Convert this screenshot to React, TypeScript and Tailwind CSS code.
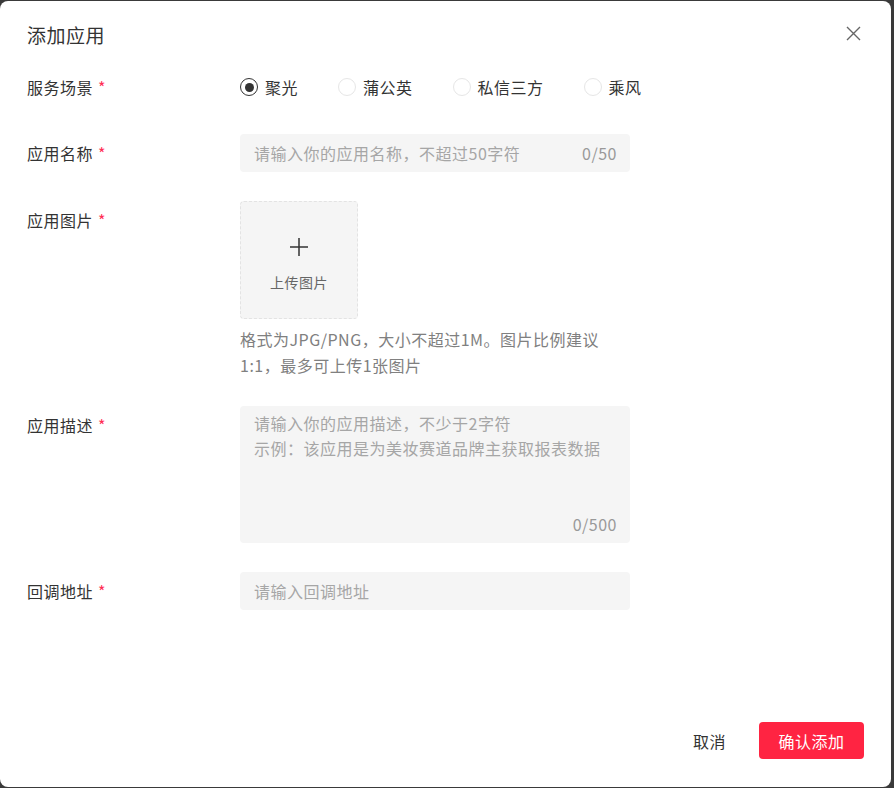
import React, { useState } from 'react';

const scenes = ['聚光', '蒲公英', '私信三方', '乘风'];

const Label: React.FC<{ text: string }> = ({ text }) => (
  <div className="w-[213px] shrink-0 h-[38px] flex items-center text-[16px] text-[#333]">
    {text}
    <span className="ml-[5px] text-[#ff2e55]">*</span>
  </div>
);

export default function App() {
  const [scene, setScene] = useState('聚光');

  return (
    <div
      className="w-[894px] h-[788px] bg-[#3a3a3a] pt-[1px] pr-[3px] tracking-[0.5px]"
      style={{ fontFamily: '"Noto Sans CJK SC", "Noto Sans", sans-serif' }}
    >
      <div className="h-[786px] bg-white rounded-[8px] flex flex-col pl-[27px] pr-[27px]">
        <div className="flex items-center justify-between pt-[15px] h-[55px] pb-[2px]">
          <h1 className="text-[19px] text-[#333]">添加应用</h1>
          <button className="w-[20px] h-[20px] flex items-center justify-center text-[#666] -mt-[3px] mr-[1px]">
            <svg width="15" height="15" viewBox="0 0 15 15" fill="none" stroke="currentColor" strokeWidth="1.4">
              <path d="M1 1L14 14M14 1L1 14" />
            </svg>
          </button>
        </div>

        <div className="mt-[12px] flex flex-col">
          <div className="flex">
            <Label text="服务场景" />
            <div className="flex items-center gap-[40px] h-[38px]">
              {scenes.map(s => (
                <label key={s} className="flex items-center gap-[7px] cursor-pointer" onClick={() => setScene(s)}>
                  <span
                    className={
                      scene === s
                        ? 'w-[18px] h-[18px] rounded-full border border-[#333] flex items-center justify-center'
                        : 'w-[18px] h-[18px] rounded-full border border-[#e6e6e6]'
                    }
                  >
                    {scene === s && <span className="w-[9px] h-[9px] rounded-full bg-[#333]" />}
                  </span>
                  <span className="text-[16px] text-[#333]">{s}</span>
                </label>
              ))}
            </div>
          </div>

          <div className="flex mt-[28px]">
            <Label text="应用名称" />
            <div className="w-[390px] h-[38px] bg-[#f5f5f5] rounded-[4px] flex items-center justify-between pl-[14px] pr-[13px] text-[16px] text-[#a6a6a6]">
              <span>请输入你的应用名称，不超过50字符</span>
              <span className="text-[#999]">0/50</span>
            </div>
          </div>

          <div className="flex mt-[29px]">
            <Label text="应用图片" />
            <div className="flex flex-col">
              <div className="w-[118px] h-[118px] bg-[#f5f5f5] rounded-[4px] border border-dashed border-[#e3e3e3] flex flex-col items-center justify-center pt-[10px]">
                <svg width="20" height="20" viewBox="0 0 20 20" fill="none" stroke="#333" strokeWidth="1.5">
                  <path d="M10 1V19M1 10H19" />
                </svg>
                <span className="mt-[15px] text-[14px] text-[#666]">上传图片</span>
              </div>
              <p className="mt-[7px] w-[390px] text-[16px] leading-[26px] text-[#808080]">
                格式为JPG/PNG，大小不超过1M。图片比例建议
                <br />
                1:1，最多可上传1张图片
              </p>
            </div>
          </div>

          <div className="flex mt-[28px]">
            <Label text="应用描述" />
            <div className="w-[390px] h-[137px] bg-[#f5f5f5] rounded-[4px] flex flex-col justify-between pl-[14px] pr-[13px] pt-[5px] pb-[6px] text-[16px] leading-[25px] text-[#a6a6a6]">
              <span>
                请输入你的应用描述，不少于2字符
                <br />
                示例：该应用是为美妆赛道品牌主获取报表数据
              </span>
              <span className="self-end text-[#999]">0/500</span>
            </div>
          </div>

          <div className="flex mt-[29px]">
            <Label text="回调地址" />
            <div className="w-[390px] h-[38px] bg-[#f5f5f5] rounded-[4px] flex items-center pl-[14px] text-[16px] text-[#a6a6a6]">
              请输入回调地址
            </div>
          </div>
        </div>

        <div className="flex-1" />

        <div className="flex items-center justify-end gap-[33px] pb-[28px]">
          <button className="text-[16px] text-[#333]">取消</button>
          <button className="w-[105px] h-[37px] rounded-[4px] bg-[#ff2442] text-white text-[16px]">确认添加</button>
        </div>
      </div>
    </div>
  );
}
